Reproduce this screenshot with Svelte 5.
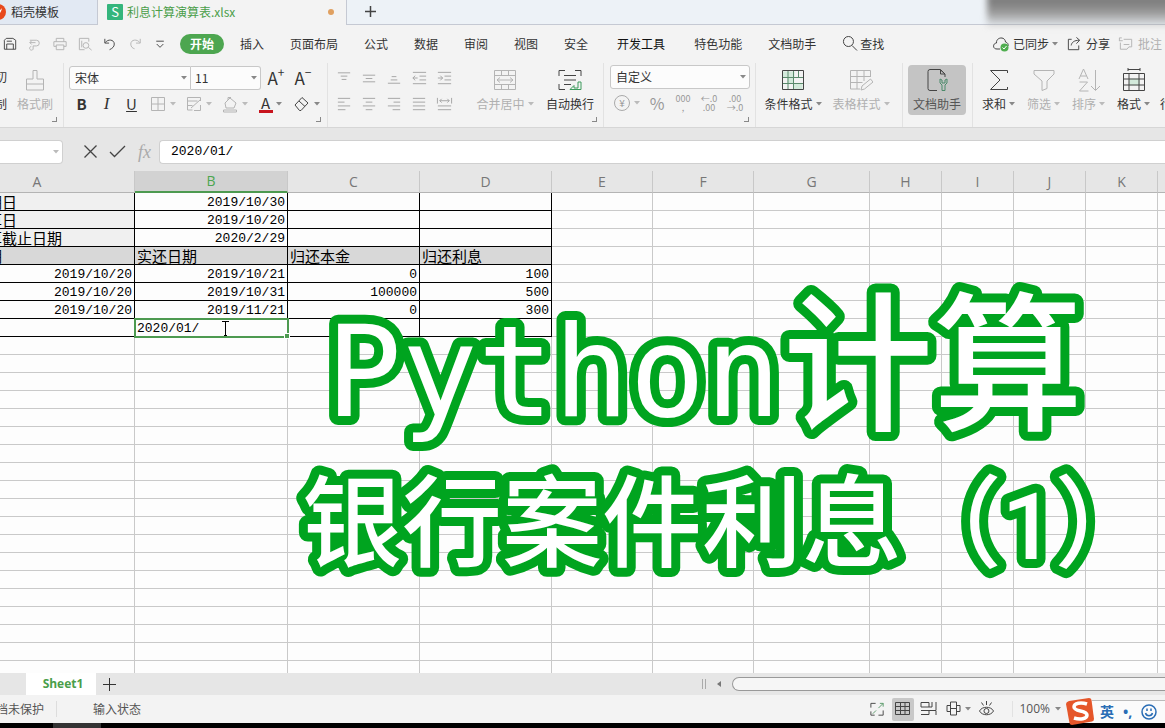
<script lang="ts">
	interface Column {
		name: string;
		width: number;
	}

	interface Cell {
		text?: string;
		align?: 'left' | 'right';
	}

	const columns: Column[] = [
		{ name: 'A', width: 195 },
		{ name: 'B', width: 153 },
		{ name: 'C', width: 132 },
		{ name: 'D', width: 132 },
		{ name: 'E', width: 101 },
		{ name: 'F', width: 101 },
		{ name: 'G', width: 116 },
		{ name: 'H', width: 72 },
		{ name: 'I', width: 72 },
		{ name: 'J', width: 72 },
		{ name: 'K', width: 72 },
		{ name: 'L', width: 72 }
	];

	const data: string[][] = [
		['借款到期日', '2019/10/30', '', ''],
		['利息起算日', '2019/10/20', '', ''],
		['利息计算截止日期', '2020/2/29', '', ''],
		['应还日期', '实还日期', '归还本金', '归还利息'],
		['2019/10/20', '2019/10/21', '0', '100'],
		['2019/10/20', '2019/10/31', '100000', '500'],
		['2019/10/20', '2019/11/21', '0', '300'],
		['', '', '', '']
	];

	const rowCount = 60;
	const rows = Array.from({ length: rowCount }, (_, i) => i);

	const menus = ['插入', '页面布局', '公式', '数据', '审阅', '视图', '安全', '开发工具', '特色功能', '文档助手'];

	const icons: Record<string, string> = {
		save: 'M2.5 4.5l2-2h7l3 2v9.500h-12zM5 14V8.500h7V14M5 5.500h5.500',
		exportPdf: 'M3 4.500h7a3 3 0 0 1 0 6H6.500V14M9 7H3M5 5L3 7l2 2M6.500 14a2 2 0 1 1-2-3',
		print: 'M4.500 6V2.500h8V6M4.500 11H2V6h13v5h-2.500M4.500 9.500h8v5h-8z',
		preview: 'M8 14.500H2.500v-12h10V6M9.500 7a3 3 0 1 1-.1 6 3 3 0 0 1 .1-6M12 12l3.500 3M5 5v7',
		undo: 'M3 3v4.500h4.500M3.500 7C6 3 13 3.500 13 8.500c0 3-2 4.500-5 6',
		redo: 'M14 3v4.500H9.500M13.500 7C11 3 4 3.500 4 8.500c0 3 2 4.500 4 5',
		more: 'M4.500 5.500h8M5 8.500l3.500 3.500L12 8.500',
		search: 'M6.500 1.500a5 5 0 1 1-.1 10 5 5 0 0 1 .1-10M10 10.500l5 5',
		share: 'M6 3.500H2.500v11h11V10M5.500 10C6 6.500 9 4.500 14 4.500M11 1.500l3.500 3-3.500 3.500',
		comment: 'M4 2H1.500v3M6 3.500h8.500v8h-3l-2 2.500H2.500V7M6 9h6M1 5h4',
		borders: 'M2.500 2.500h13v13h-13zM9 2.500v13M2.500 9h13',
		cellStyle: 'M15.500 6V2.500h-13v12.500h5M2.500 6h10M2.500 10.500h5M9 15.500h6.500V10M6 13l9-8',
		fill: 'M4 8l5-5 6 5-2 5H5zM7 5V2.500h3M2.500 15h13v2h-13z',
		eraser: 'M2 10l7-7.500 6 5.500-7 7.500H6.500zM6 6l6 5.500',
		top: 'M2 3h13M5 6.500h7M6 10h5',
		middle: 'M2 5.500h13M5 9h7M2 12.500h13',
		bottom: 'M6 7h5M5 10.500h7M2 14h13',
		outdent: 'M2 2.500h14M9 6.500h7M9 10.500h7M2 14.500h14M7 8.500H2M4.500 6L2 8.500 4.500 11',
		indent: 'M2 2.500h14M9 6.500h7M9 10.500h7M2 14.500h14M2 8.500h5M4.500 6L7 8.500 4.500 11',
		left: 'M2 2.500h13M2 6.500h7M2 10.500h13M2 14.500h8',
		center: 'M2 2.500h13M5 6.500h7M2 10.500h13M5 14.500h7',
		right: 'M2 2.500h13M8 6.500h7M2 10.500h13M7 14.500h8',
		justify: 'M2 2.500h13M2 6.500h13M2 10.500h13M2 14.500h13',
		distribute: 'M1.500 2v6M16.500 2v6M4 5h10M6 3L4 5l2 2M12 3l2 2-2 2M2 10.500h14M2 14.500h14',
		gridView: 'M1.500 2.500h14v12h-14zM6.500 2.500v12M11 2.500v12M1.500 6.500h14M1.500 10.500h14',
		pageView: 'M1 7V2.500h8V7zM12 2v5M16 2v8M9 7h3M1 10.500h15V15M9 10.500V14.500H1',
		layoutView: 'M5.500 2h6v13h-6zM5.500 5.500H2v6h3.500M11.500 5.500H15v6h-3.500M5.500 8.500h6',
		eye: 'M1.500 11C4 6 13 6 15.500 11c-2.500 5-11.500 5-14 0M8.500 8.500a2.500 2.500 0 1 1-.1 5 2.500 2.500 0 0 1 .1-5M8.500 1v4M3.500 2.500l2 3M13.500 2.500l-2 3'
	};

	let formula = $state('2020/01/');

	function cellAt(row: number, col: number): Cell {
		const text = data[row]?.[col] ?? '';
		return { text, align: /^\d/.test(text) ? 'right' : 'left' };
	}
</script>

{#snippet icon(name: string, size = 17)}
	<svg class="icon" width={size} height={size} viewBox="0 0 18 18" aria-hidden="true"><path d={icons[name]} /></svg>
{/snippet}

{#snippet arrow()}
	<svg class="arrow" width="6" height="4" viewBox="0 0 6 4" aria-hidden="true"><path d="M0 0h6L3 3.500z" /></svg>
{/snippet}

<div class="app">
	<header class="tabs">
		<button class="tab template">
			<svg width="16" height="16" viewBox="0 0 16 16" aria-hidden="true"><circle cx="8" cy="8" r="8" fill="#e8491d" /><path d="M4 8c3-1 6-1 8-4-1 5-3 7-6 7z" fill="#fff" /></svg>
			稻壳模板
		</button>
		<button class="tab document">
			<span class="sheet-logo">S</span>
			<span class="doc-name">利息计算演算表.xlsx</span>
			<span class="unsaved"></span>
		</button>
		<button class="tab add" aria-label="新建">
			<svg width="13" height="13" viewBox="0 0 13 13" aria-hidden="true"><path d="M6.500 1v11M1 6.500h11" stroke="#444" stroke-width="1.500" /></svg>
		</button>
		<div class="shade"></div>
	</header>

	<nav class="menubar">
		<div class="quick">
			<button aria-label="保存">{@render icon('save')}</button>
			<button class="off" aria-label="输出为PDF">{@render icon('exportPdf')}</button>
			<button class="off" aria-label="打印">{@render icon('print')}</button>
			<button class="off" aria-label="打印预览">{@render icon('preview')}</button>
			<button aria-label="撤销">{@render icon('undo')}</button>
			<button class="off" aria-label="恢复">{@render icon('redo')}</button>
			<button aria-label="更多">{@render icon('more')}</button>
		</div>
		<button class="start">开始</button>
		<div class="menus">
			{#each menus as menu (menu)}
				<button class:strong={menu === '开发工具'}>{menu}</button>
			{/each}
			<button class="find">{@render icon('search', 18)}查找</button>
		</div>
		<div class="account">
			<button>
				<svg class="icon" width="18" height="18" viewBox="0 0 18 18" aria-hidden="true">
					<path d="M8 14H5C0 14 1 8 4.500 8 4 2 13 1 13.500 7c2 .5 3 2 2.500 4" />
					<circle cx="12.500" cy="12.500" r="4" fill="#4fae4f" stroke="none" />
					<path d="M10.500 12.500l1.500 1.500 2.500-3" style:stroke="#fff" />
				</svg>
				已同步 {@render arrow()}
			</button>
			<button>{@render icon('share')}分享</button>
			<button class="off">{@render icon('comment')}批注</button>
		</div>
	</nav>

	<section class="ribbon">
		<div class="group clipboard">
			<div class="cut"><span>剪切</span><span>复制</span></div>
			<button class="big off">
				<svg class="icon" width="24" height="24" viewBox="0 0 24 24" aria-hidden="true"><path d="M10 2.500h4V11h6.500v5h-17v-5H10zM3.500 16v6h17v-6" /></svg>
				<span>格式刷</span>
			</button>
			<i class="corner"></i>
		</div>

		<div class="group font">
			<div class="line">
				<label class="combo name"><select aria-label="字体"><option>宋体</option></select>{@render arrow()}</label>
				<label class="combo size"><select aria-label="字号"><option>11</option></select>{@render arrow()}</label>
				<button class="letter grow" aria-label="增大字号">A<sup>+</sup></button>
				<button class="letter grow" aria-label="减小字号">A<sup>−</sup></button>
			</div>
			<div class="line">
				<button class="letter"><b>B</b></button>
				<button class="letter"><em>I</em></button>
				<button class="letter"><u>U</u></button>
				<button class="drop off" aria-label="边框">{@render icon('borders', 18)}{@render arrow()}</button>
				<button class="drop off" aria-label="单元格样式">{@render icon('cellStyle', 18)}{@render arrow()}</button>
				<button class="drop off" aria-label="填充颜色">{@render icon('fill', 18)}{@render arrow()}</button>
				<button class="drop"><span class="font-color">A</span>{@render arrow()}</button>
				<button class="drop" aria-label="清除">{@render icon('eraser', 18)}{@render arrow()}</button>
			</div>
			<i class="corner"></i>
		</div>

		<div class="group align">
			<div class="stack">
				<div class="line">
					{#each ['top', 'middle', 'bottom', 'outdent', 'indent'] as name (name)}
						<button class="tool" aria-label={name}>{@render icon(name)}</button>
					{/each}
				</div>
				<div class="line">
					{#each ['left', 'center', 'right', 'justify', 'distribute'] as name (name)}
						<button class="tool" aria-label={name}>{@render icon(name)}</button>
					{/each}
				</div>
			</div>
			<button class="big merge off">
				<svg class="icon" width="24" height="24" viewBox="0 0 24 24" aria-hidden="true"><path d="M1.500 2.500h21v19h-21zM1.500 7.500h21M1.500 16.500h21M8.500 2.500v5M15.500 2.500v5M8.500 16.500v5M15.500 16.500v5M4 12h16M7 9.500L4 12l3 2.500M17 9.500l3 2.500-3 2.500" /></svg>
				<span>合并居中 {@render arrow()}</span>
			</button>
			<button class="big wrap">
				<svg class="icon" width="24" height="24" viewBox="0 0 24 24" aria-hidden="true">
					<path d="M1 8V2.500h6M17 2.500h6V8M1 16v5.500h6M6 7.500h12M6 12h12M6 16.500h7" />
					<path d="M23 14v7.500H12l4-4v2.500h4V14z" style:stroke="#3c9a5c" />
				</svg>
				<span>自动换行</span>
			</button>
			<i class="corner"></i>
		</div>

		<div class="group number-format">
			<label class="combo format"><select aria-label="数字格式"><option>自定义</option></select>{@render arrow()}</label>
			<div class="line off">
				<button class="currency"><span class="yen">¥</span>{@render arrow()}</button>
				<button class="percent">%</button>
				<button class="digits"><span>000</span><span>,</span></button>
				<button class="digits"><span>←.0</span><span>.00</span></button>
				<button class="digits"><span>.00</span><span>→.0</span></button>
			</div>
			<i class="corner"></i>
		</div>

		<div class="group styles">
			<button class="big">
				<svg class="icon" width="24" height="24" viewBox="0 0 24 24" aria-hidden="true">
					<path d="M1.500 3.500h12v6h-12zM6 9.500h6.500v6H6zM12.500 15.500h9v6h-9z" fill="#d3eadb" stroke="none" />
					<path d="M7 9.500v6M12.500 3v6M7 15.500v6M12.500 9.500v12M17.500 3v6M2 9.500h20M2 15.500h20M7 3v6" style:stroke="#5a8a6c" />
					<path d="M1.500 2.500h21v19h-21z" />
				</svg>
				<span>条件格式 {@render arrow()}</span>
			</button>
			<button class="big off">
				<svg class="icon" width="24" height="24" viewBox="0 0 24 24" aria-hidden="true"><path d="M21.500 9V2.500h-20v18.500H11M1.500 8.500h20M1.500 14.500h12M8 2.500V21M15 2.500V13M12 22l1-4 8.500-7 2.500 3-8.500 7z" /></svg>
				<span>表格样式 {@render arrow()}</span>
			</button>
		</div>

		<div class="group helper">
			<button class="big pressed">
				<svg class="icon" width="24" height="24" viewBox="0 0 24 24" aria-hidden="true">
					<path d="M12 22.500H5a2 2 0 0 1-2-2V3.500a2 2 0 0 1 2-2h10.500L20 6v3M15.500 2v4H20z" />
					<path d="M15 11v4l2 2v5.500h3V17l2-2v-4l-2 1v3h-3v-3z" style:stroke="#4b8a6a" />
				</svg>
				<span>文档助手</span>
			</button>
		</div>

		<div class="group edit">
			<button class="big">
				<svg class="icon" width="24" height="24" viewBox="0 0 24 24" aria-hidden="true"><path d="M20.500 5V2.500h-17L13 12l-9.500 9.500h17V19" /></svg>
				<span>求和 {@render arrow()}</span>
			</button>
			<button class="big off">
				<svg class="icon" width="24" height="24" viewBox="0 0 24 24" aria-hidden="true"><path d="M2 2.500h20V6l-7 7v7.500l-5 2V13L2 6z" /></svg>
				<span>筛选 {@render arrow()}</span>
			</button>
			<button class="big off">
				<svg class="icon" width="24" height="24" viewBox="0 0 24 24" aria-hidden="true"><path d="M2 11L6.500 1 11 11M3.500 8h6M2.500 14h8l-8 9h9M18.500 2v20M14 18l4.500 4.500L23 18" /></svg>
				<span>排序 {@render arrow()}</span>
			</button>
			<button class="big">
				<svg class="icon" width="24" height="24" viewBox="0 0 24 24" aria-hidden="true">
					<path d="M7 10.500h11v7H7z" fill="#d3eadb" stroke="none" />
					<path d="M1.500 5.500h21v17h-21zM6 1.500h12M6 0v3M18 0v3M1.500 11h21M1.500 17h21M7 5.500v17M17 5.500v17" />
				</svg>
				<span>格式 {@render arrow()}</span>
			</button>
			<button class="big rowcol"><span>行和列</span></button>
		</div>
	</section>

	<section class="formula-bar">
		<label class="name-box"><input aria-label="名称框" />{@render arrow()}</label>
		<button aria-label="取消"><svg width="15" height="15" viewBox="0 0 15 15" aria-hidden="true"><path d="M1.500 1.500l12 12M13.500 1.500l-12 12" /></svg></button>
		<button aria-label="输入"><svg width="17" height="15" viewBox="0 0 17 15" aria-hidden="true"><path d="M1 8l4.500 4.500L16 2" /></svg></button>
		<button class="fx">fx</button>
		<input class="formula" aria-label="编辑栏" bind:value={formula} />
	</section>

	<main class="sheet">
		<table>
			<colgroup>
				{#each columns as column (column.name)}
					<col style="width: {column.width}px" />
				{/each}
			</colgroup>
			<thead>
				<tr>
					{#each columns as column (column.name)}
						<th class:current={column.name === 'B'}>{column.name}</th>
					{/each}
				</tr>
			</thead>
			<tbody>
				{#each rows as row (row)}
					<tr class:heading={row === 3}>
						{#each columns as column, col (column.name)}
							{@const cell = cellAt(row, col)}
							<td
								class:boxed={row < data.length && col < 4}
								class:label={row < 3 && col === 0}
								class:number={cell.align === 'right'}
								class:editing={row === 7 && col === 1}
							>
								{#if row === 7 && col === 1}
									<input aria-label="B8" bind:value={formula} />
									<svg class="ibeam" width="7" height="15" viewBox="0 0 7 15" aria-hidden="true"><path d="M0 .5h7M3.500 .5v14M2 14.500h3" /></svg>
									<span class="handle"></span>
								{:else}
									{cell.text}
								{/if}
							</td>
						{/each}
					</tr>
				{/each}
			</tbody>
		</table>
	</main>

	<div class="sheet-tabs">
		<button class="sheet-tab">Sheet1</button>
		<button class="sheet-add" aria-label="新建工作表"><svg width="13" height="13" viewBox="0 0 13 13" aria-hidden="true"><path d="M6.500 0v13M0 6.500h13" stroke="#333" /></svg></button>
		<div class="scroll">
			<span class="grip"></span>
			<button aria-label="向左滚动"><svg width="4" height="6" viewBox="0 0 4 6" aria-hidden="true"><path d="M4 0v6L0 3z" fill="#777" /></svg></button>
			<div class="track"></div>
		</div>
	</div>

	<footer class="status">
		<div class="protect"><span>文档未保护</span></div>
		<span class="state">输入状态</span>
		<div class="views">
			<button aria-label="全屏">
				<svg class="icon" width="17" height="17" viewBox="0 0 18 18" aria-hidden="true">
					<path d="M2 7V2.500h5M15 10v5h-5M2 11v4h4" />
					<path d="M10 7.500L15 2.500M11.500 2.500H15V6M7.500 10L4 13.500" style:stroke="#5a9a6a" />
				</svg>
			</button>
			<button class="on" aria-label="普通视图">{@render icon('gridView', 18)}</button>
			<button aria-label="分页预览">{@render icon('pageView', 18)}</button>
			<button class="layout" aria-label="页面布局">{@render icon('layoutView', 18)}{@render arrow()}</button>
			<button aria-label="护眼模式">{@render icon('eye', 18)}</button>
		</div>
		<button class="zoom">100% {@render arrow()}</button>
	</footer>
	<div class="taskbar"><span></span></div>

	<div class="ime">
		<svg width="28" height="28" viewBox="0 0 28 28" aria-hidden="true">
			<path d="M3 4l20-3q2 0 2.500 2L28 22q0 2-2 2.500L6 28q-2 0-2.500-2L0 7q0-2 3-3z" fill="#e5562a" />
			<path d="M21 7c-6-2-13-1-13 3 0 5 13 3 13 8 0 4-7 5-13 3" fill="none" stroke="#fff" stroke-width="3.500" />
		</svg>
		<div class="ime-bar">
			<b>英</b>
			<b>•,</b>
			<svg width="16" height="16" viewBox="0 0 16 16" aria-hidden="true"><circle cx="8" cy="8" r="7" /><path d="M4.500 9c1 3.500 6 3.500 7 0M6 4.500v2.500M10 4.500v2.500" /></svg>
		</div>
	</div>

	<svg class="caption" width="860" height="320" viewBox="0 0 860 320">
		<text x="488" y="149" class="large">计算</text>
		<text x="31" y="146" class="latin">Python</text>
		<text x="7" y="289" class="second">银行案件利息（<tspan class="digit">1</tspan>）</text>
	</svg>
</div>

<style>
	:global(body) {
		margin: 0;
		background: #000;
	}

	.app {
		position: relative;
		display: flex;
		flex-direction: column;
		height: 100vh;
		overflow: hidden;
		background: #f3f3f3;
		color: #333;
		font-family: 'Noto Sans CJK SC', 'Open Sans', sans-serif;
		font-size: 12px;
		line-height: 16px;
		white-space: nowrap;
	}

	button,
	select,
	input {
		font: inherit;
		color: inherit;
		border: 0;
		padding: 0;
		margin: 0;
		background: none;
		white-space: nowrap;
	}

	button {
		display: flex;
		align-items: center;
		justify-content: center;
		flex-shrink: 0;
	}

	svg {
		flex-shrink: 0;
	}

	.icon {
		fill: none;
		stroke: #444;
		stroke-width: 1;
	}

	.arrow {
		fill: #888;
	}

	.off {
		color: #b0b0b0;
	}

	.off .icon {
		stroke: #b4b4b4;
	}

	.off .arrow {
		fill: #bbb;
	}

	/* Document tabs */
	.tabs {
		position: relative;
		display: flex;
		flex-shrink: 0;
		height: 24px;
		background: #edf2f7;
		border-bottom: 1px solid #c5c9d3;
	}

	.tab.template {
		box-sizing: border-box;
		justify-content: flex-start;
		gap: 5px;
		margin-left: -10px;
		width: 108px;
		background: #e2e9f3;
		border-right: 1px solid #c5c9d3;
	}

	.tab.document {
		box-sizing: border-box;
		width: 249px;
		height: 25px;
		padding: 0 12px 2px 9px;
		gap: 4px;
		color: #4a9e4a;
		background: #f3f3f3;
		border-right: 1px solid #c5c9d3;
	}

	.sheet-logo {
		width: 16px;
		height: 16px;
		border-radius: 1px;
		background: #35b57c;
		color: #fff;
		font-size: 13px;
	}

	.doc-name {
		flex: 1;
		text-align: left;
	}

	.unsaved {
		width: 6px;
		height: 6px;
		border-radius: 50%;
		background: #e0a060;
	}

	.tab.add {
		width: 46px;
		height: 22px;
	}

	.shade {
		position: absolute;
		top: -6px;
		right: -8px;
		width: 186px;
		height: 34px;
		background: linear-gradient(#7c7c7c 20%, #9a9a9a 55%, transparent);
		filter: blur(3px);
		z-index: 2;
	}

	/* Menu row */
	.menubar {
		display: flex;
		align-items: center;
		flex-shrink: 0;
		height: 38px;
	}

	.quick {
		display: flex;
		margin-left: -2px;
	}

	.quick button {
		width: 25px;
	}

	.start {
		width: 44px;
		height: 20px;
		margin-left: 7px;
		border-radius: 10px;
		background: #4da650;
		color: #fff;
		font-weight: 700;
	}

	.menus {
		display: flex;
		gap: 26px;
		margin-left: 16px;
	}

	.strong {
		padding: 0 3px;
		color: #111;
	}

	.account {
		display: flex;
		gap: 8px;
		width: 173px;
		margin-left: auto;
	}

	.account button {
		gap: 3px;
	}

	/* Ribbon */
	.ribbon {
		display: flex;
		flex-shrink: 0;
		height: 64px;
		border-bottom: 1px solid #d6d6d6;
	}

	.group {
		position: relative;
		box-sizing: border-box;
		flex-shrink: 0;
		padding-top: 2px;
		border-right: 1px solid #e2e2e2;
	}

	.corner {
		position: absolute;
		right: 6px;
		bottom: 5px;
		width: 4px;
		height: 4px;
		border-right: 1px solid #888;
		border-bottom: 1px solid #888;
	}

	.line {
		display: flex;
		align-items: center;
		height: 26px;
	}

	.clipboard {
		display: flex;
		width: 64px;
	}

	.cut {
		display: flex;
		flex-direction: column;
		gap: 11px;
		width: 7px;
		padding-top: 4px;
		direction: rtl;
	}

	.big {
		flex-direction: column;
		justify-content: flex-start;
		gap: 4px;
		height: 50px;
		padding-top: 3px;
	}

	.big span {
		display: flex;
		align-items: center;
		gap: 3px;
	}

	.clipboard .big {
		width: 56px;
	}

	.font {
		width: 264px;
		padding-left: 5px;
	}

	.combo {
		display: flex;
		align-items: center;
		box-sizing: border-box;
		height: 24px;
		padding: 0 3px 0 5px;
		background: #fcfcfc;
		border: 1px solid #c8c8c8;
		border-radius: 3px;
	}

	.combo select {
		flex: 1;
		min-width: 0;
		appearance: none;
		outline: none;
	}

	.combo.name {
		width: 122px;
		border-radius: 3px 0 0 3px;
	}

	.combo.size {
		width: 70px;
		padding-left: 4px;
		border-left: 0;
		border-radius: 0 3px 3px 0;
	}

	.letter {
		width: 25px;
		font-size: 15px;
		line-height: 20px;
	}

	.grow {
		margin-left: 3px;
		width: 24px;
		font-size: 17px;
	}

	.letter sup {
		font-size: 12px;
		line-height: 8px;
		align-self: flex-start;
	}

	.letter em {
		font-family: 'Liberation Serif', serif;
		font-size: 17px;
	}

	.drop {
		gap: 3px;
		width: 36px;
	}

	.font-color {
		width: 14px;
		height: 14px;
		border-bottom: 3px solid #c8141e;
		font-size: 15px;
		line-height: 14px;
	}

	.align {
		display: flex;
		width: 276px;
		padding-left: 4px;
	}

	.tool {
		width: 25px;
	}

	.tool .icon {
		stroke: #a4a4a4;
	}

	.merge {
		width: 60px;
		margin-left: 18px;
	}

	.wrap {
		width: 52px;
		margin-left: 9px;
	}

	.number-format {
		width: 152px;
		padding-left: 6px;
	}

	.combo.format {
		width: 140px;
	}

	.number-format .line {
		height: 28px;
		color: #999;
	}

	.currency {
		width: 34px;
		gap: 4px;
	}

	.yen {
		width: 14px;
		border: 1px solid #aaa;
		border-radius: 50%;
		font-size: 10px;
		line-height: 14px;
	}

	.percent {
		width: 26px;
		font-size: 16px;
	}

	.digits {
		flex-direction: column;
		width: 26px;
		font-size: 9px;
		line-height: 9px;
	}

	.styles {
		display: flex;
		width: 147px;
		padding-left: 3px;
	}

	.styles .big {
		width: 68px;
	}

	.helper {
		width: 70px;
		padding-left: 5px;
	}

	.pressed {
		width: 58px;
		border-radius: 4px;
		background: #c4c4c4;
		color: #555;
	}

	.edit {
		display: flex;
		padding-left: 3px;
		border-right: 0;
	}

	.edit .big {
		width: 45px;
	}

	.edit .rowcol {
		width: 40px;
		padding-top: 31px;
		box-sizing: border-box;
		margin-left: 2px;
	}

	/* Formula bar */
	.formula-bar {
		display: flex;
		align-items: center;
		flex-shrink: 0;
		height: 43px;
		padding-top: 4px;
		box-sizing: border-box;
		background: #e6e6e6;
	}

	.name-box {
		display: flex;
		align-items: center;
		box-sizing: border-box;
		width: 63px;
		height: 24px;
		margin-right: 14px;
		padding-right: 3px;
		background: #fff;
		border: 1px solid #d0d0d0;
		border-left: 0;
		border-radius: 0 4px 4px 0;
	}

	.name-box input {
		flex: 1;
		min-width: 0;
	}

	.name-box .arrow {
		fill: #bbb;
	}

	.formula-bar button {
		width: 27px;
	}

	.formula-bar button svg {
		fill: none;
		stroke: #444;
		stroke-width: 1.300;
	}

	.formula-bar .fx {
		color: #aaa;
		font-family: 'Liberation Serif', serif;
		font-size: 18px;
		font-style: italic;
	}

	.formula {
		flex: 1;
		min-width: 0;
		height: 22px;
		margin-left: 1px;
		padding-left: 11px;
		background: #fff;
		border: 1px solid #d0d0d0;
		border-right: 0;
		border-radius: 4px 0 0 4px;
		color: #000;
		font-family: 'Liberation Mono', monospace;
		font-size: 13px;
		outline: none;
	}

	/* Grid */
	.sheet {
		flex: 1;
		min-height: 0;
		overflow: hidden;
		background: #fdfdfd;
	}

	table {
		width: 1290px;
		margin-left: -60px;
		table-layout: fixed;
		border-collapse: separate;
		border-spacing: 0;
	}

	th {
		box-sizing: border-box;
		height: 22px;
		padding: 0;
		background: #e6e6e6;
		border-right: 1px solid #c8c8c8;
		border-bottom: 1px solid #b4b4b4;
		color: #777;
		font-family: 'Open Sans', sans-serif;
		font-size: 14px;
		font-weight: 400;
		line-height: 18px;
	}

	th.current {
		background: #d2d2d2;
		border-bottom: 2px solid #4d9a50;
		color: #4da650;
	}

	td {
		box-sizing: border-box;
		height: 18px;
		padding: 0 2px;
		border-right: 1px solid #c9c9c9;
		border-bottom: 1px solid #c9c9c9;
		color: #000;
		font-size: 15px;
		line-height: 17px;
	}

	td.boxed {
		border-color: #000;
	}

	td.label {
		background: #f0f0f0;
	}

	tr.heading td.boxed {
		background: #d8d8d8;
	}

	td.number {
		padding-top: 2px;
		text-align: right;
		font-family: 'Liberation Mono', monospace;
		font-size: 13px;
		line-height: 15px;
	}

	td.editing {
		position: relative;
		outline: 2px solid #4d9a50;
		outline-offset: -1px;
	}

	td.editing input {
		display: block;
		box-sizing: border-box;
		width: 100%;
		height: 17px;
		padding-top: 2px;
		font-family: 'Liberation Mono', monospace;
		font-size: 13px;
		line-height: 15px;
		outline: none;
	}

	.ibeam {
		position: absolute;
		left: 87px;
		top: 2px;
		fill: none;
		stroke: #000;
	}

	.handle {
		position: absolute;
		right: -3px;
		bottom: -3px;
		width: 4px;
		height: 4px;
		background: #4d9a50;
		border: 1px solid #fff;
	}

	/* Sheet tabs */
	.sheet-tabs {
		display: flex;
		flex-shrink: 0;
		height: 22px;
		padding-left: 26px;
		background: #e6e6e6;
	}

	.sheet-tab {
		width: 70px;
		background: #fff;
		color: #4a9e4a;
		font-family: 'Open Sans', sans-serif;
		font-weight: 700;
		padding-left: 4px;
	}

	.sheet-add {
		width: 27px;
	}

	.scroll {
		display: flex;
		align-items: center;
		width: 41%;
		margin-left: auto;
	}

	.grip {
		width: 2px;
		height: 10px;
		margin-left: 4px;
		border: solid #aaa;
		border-width: 0 1px;
	}

	.scroll button {
		width: 26px;
	}

	.track {
		flex: 1;
		height: 12px;
		background: #f6f6f6;
		border: 1px solid #999;
		border-right: 0;
		border-radius: 7px 0 0 7px;
	}

	/* Status bar */
	.status {
		display: flex;
		align-items: center;
		flex-shrink: 0;
		height: 28px;
		padding-right: 104px;
		color: #555;
	}

	.protect {
		display: flex;
		justify-content: flex-end;
		width: 44px;
		padding-right: 12px;
		border-right: 1px solid #ddd;
	}

	.state {
		margin-left: 36px;
	}

	.views {
		display: flex;
		gap: 4px;
		margin-left: auto;
		margin-right: 14px;
	}

	.views button {
		width: 22px;
		height: 23px;
	}

	.views .on {
		border-radius: 2px;
		background: #c8c8c8;
	}

	.views .layout {
		width: 28px;
		gap: 2px;
	}

	.zoom {
		gap: 5px;
		padding-left: 6px;
		border-left: 1px solid #e2e2e2;
		font-family: 'Open Sans', sans-serif;
	}

	.taskbar {
		flex-shrink: 0;
		height: 5px;
		padding-left: 53px;
		background: #000;
	}

	.taskbar span {
		display: block;
		width: 48px;
		height: 5px;
		background: #333;
	}

	/* Input method bar */
	.ime {
		position: absolute;
		right: 0;
		bottom: 3px;
		display: flex;
		align-items: center;
		width: 99px;
	}

	.ime-bar {
		flex: 1;
		display: flex;
		align-items: center;
		gap: 9px;
		height: 22px;
		margin-left: -2px;
		padding-left: 8px;
		background: #fbfbfb;
		border-top: 1px solid #bbb;
		color: #2a6db5;
		font-family: 'Open Sans', 'Noto Sans CJK SC', sans-serif;
		font-size: 14px;
	}

	.ime > svg {
		z-index: 1;
	}

	.ime-bar svg {
		fill: none;
		stroke: #2a6db5;
		stroke-width: 1.500;
	}

	/* Video caption */
	.caption {
		position: absolute;
		top: 270px;
		left: 295px;
		fill: #fff;
		stroke: #00a41f;
		stroke-width: 18px;
		stroke-linejoin: round;
		paint-order: stroke fill;
		font-weight: 500;
		pointer-events: none;
	}

	.latin {
		font-family: 'DejaVu Sans Mono', monospace;
		font-size: 126px;
		font-weight: 400;
	}

	.large {
		font-size: 150px;
	}

	.second {
		font-size: 100px;
	}

	.digit {
		font-family: Roboto, sans-serif;
		font-size: 92px;
	}
</style>
